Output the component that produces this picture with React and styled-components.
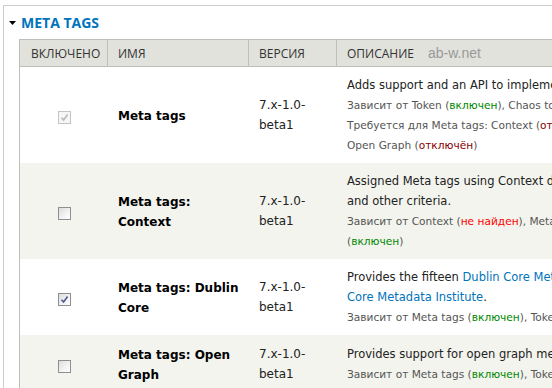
import React from "react";
import styled, { createGlobalStyle } from "styled-components";

const Global = createGlobalStyle`
  html, body { margin: 0; padding: 0; background: #fff; overflow: hidden; }
  body { font-family: "DejaVu Sans", Verdana, sans-serif; color: #333; }
`;

const Fieldset = styled.div`
  margin: 5px 0 0 3px;
  border-top: 1px solid #ccc;
  border-left: 1px solid #ccc;
  padding: 0 0 0 15px;
  width: 1000px;
  height: 400px;
`;

const Legend = styled.div`
  display: flex;
  align-items: center;
  gap: 5px;
  height: 33px;
  margin-left: -10px;
  font-family: "Open Sans", sans-serif;
  font-weight: 700;
  font-size: 14px;
  color: #0074bd;
  text-transform: uppercase;
`;

const Arrow = styled.svg`
  width: 7px;
  height: 4px;
  flex: none;
  margin-top: 1px;
`;

const Table = styled.div`
  border-left: 1px solid #bebfb9;
  width: 880px;
`;

const COLS = "88px 141px 88px 1fr";

const HeaderRow = styled.div`
  display: grid;
  grid-template-columns: ${COLS};
  height: 28px;
  box-sizing: border-box;
  background: #e1e2dc;
  border-top: 1px solid #bebfb9;
  border-bottom: 1px solid #bebfb9;
`;

const Th = styled.div`
  display: flex;
  align-items: center;
  padding: 0 10px 0 ${(p) => p.$pl || 10}px;
  border-right: 1px solid #bebfb9;
  font-family: "Open Sans", sans-serif;
  font-size: 12px;
  color: #333;
  text-transform: uppercase;
  white-space: nowrap;
`;

const Watermark = styled.span`
  margin-left: 14px;
  font-family: "Liberation Sans", Arial, sans-serif;
  font-size: 14px;
  color: #999;
  text-transform: none;
`;

const Row = styled.div`
  display: grid;
  grid-template-columns: ${COLS};
  background: ${(p) => (p.$even ? "#f3f4ee" : "#fff")};
`;

const Cell = styled.div`
  padding: 8px 10px;
  align-self: center;
  line-height: 20px;
`;

const CheckCell = styled(Cell)`
  display: flex;
  justify-content: center;
  padding-top: 12px;
  padding-bottom: 8px;
`;

const Name = styled(Cell)`
  font-weight: 700;
  font-size: 12px;
  color: #000;
  padding-top: 10px;
  padding-bottom: 8px;
`;

const Version = styled(Cell)`
  font-size: 12px;
  color: #222;
`;

const Desc = styled(Cell)`
  color: #222;
`;

const Line = styled.div`
  white-space: nowrap;
  font-size: ${(p) => (p.$small ? "10.6px" : "11.5px")};
  color: ${(p) => (p.$small ? "#555" : "#222")};
`;

const Status = styled.span`
  color: ${(p) =>
    p.$kind === "on" ? "#080" : p.$kind === "off" ? "#800" : "#f00"};
`;

const Link = styled.a`
  color: #0074bd;
  text-decoration: none;
`;

const Box = styled.span`
  display: inline-flex;
  align-items: center;
  justify-content: center;
  box-sizing: border-box;
  width: 13px;
  height: 13px;
  border: 1px solid ${(p) => (p.$disabled ? "#c4c4c4" : "#8f8f8f")};
  background: ${(p) =>
    p.$disabled
      ? "#f6f6f6"
      : "linear-gradient(135deg, #dcdcdc 0%, #f4f4f4 60%, #ffffff 100%)"};
`;

const Check = ({ checked, disabled }) => (
  <Box $disabled={disabled}>
    {checked && (
      <svg width="9" height="9" viewBox="0 0 9 9">
        <path
          d="M1.5 4.8 L3.6 7 L7.6 1.6"
          fill="none"
          stroke={disabled ? "#b8b8b8" : "#4a5a90"}
          strokeWidth="1.6"
        />
      </svg>
    )}
  </Box>
);

const on = (t = "включен") => <Status $kind="on">{t}</Status>;
const off = (t = "отключён") => <Status $kind="off">{t}</Status>;
const miss = (t = "не найден") => <Status $kind="miss">{t}</Status>;

const rows = [
  {
    checked: true,
    disabled: true,
    name: "Meta tags",
    lines: [
      { text: <>Adds support and an API to implement meta tags.</> },
      {
        small: true,
        text: (
          <>
            Зависит от Token ({on()}), Chaos tools ({on()})
          </>
        ),
      },
      {
        small: true,
        text: (
          <>
            Требуется для Meta tags: Context ({off()}), Meta tags: Dublin Core ({on()}), Meta tags:
          </>
        ),
      },
      { small: true, text: <>Open Graph ({off()})</> },
    ],
  },
  {
    checked: false,
    name: "Meta tags: Context",
    lines: [
      {
        text: (
          <>Assigned Meta tags using Context definitions, allowing them to be assigned by path</>
        ),
      },
      { text: <>and other criteria.</> },
      {
        small: true,
        text: (
          <>
            Зависит от Context ({miss()}), Meta tags ({on()}), Token ({on()}), Chaos tools
          </>
        ),
      },
      { small: true, text: <>({on()})</> },
    ],
  },
  {
    checked: true,
    name: "Meta tags: Dublin Core",
    lines: [
      {
        text: (
          <>
            Provides the fifteen <Link>Dublin Core Metadata Element Set 1.1</Link> elements from the{" "}
            <Link>Dublin</Link>
          </>
        ),
      },
      {
        text: (
          <>
            <Link>Core Metadata Institute</Link>.
          </>
        ),
      },
      {
        small: true,
        text: (
          <>
            Зависит от Meta tags ({on()}), Token ({on()}), Chaos tools ({on()})
          </>
        ),
      },
    ],
  },
  {
    checked: false,
    name: "Meta tags: Open Graph",
    lines: [
      { text: <>Provides support for open graph meta tags.</> },
      {
        small: true,
        text: (
          <>
            Зависит от Meta tags ({on()}), Token ({on()}), Chaos tools ({on()})
          </>
        ),
      },
    ],
  },
];

export default function App() {
  return (
    <>
      <Global />
      <Fieldset>
        <Legend>
          <Arrow viewBox="0 0 7 4">
            <path d="M0 0 H7 L3.5 4 Z" fill="#000" />
          </Arrow>
          Meta tags
        </Legend>
        <Table>
          <HeaderRow>
            <Th $pl={11}>Включено</Th>
            <Th>Имя</Th>
            <Th>Версия</Th>
            <Th>
              Описание<Watermark>ab-w.net</Watermark>
            </Th>
          </HeaderRow>
          {rows.map((r, i) => (
            <Row key={r.name} $even={i % 2 === 1}>
              <CheckCell>
                <Check checked={r.checked} disabled={r.disabled} />
              </CheckCell>
              <Name>{r.name}</Name>
              <Version>7.x-1.0-beta1</Version>
              <Desc>
                {r.lines.map((l, j) => (
                  <Line key={j} $small={l.small}>
                    {l.text}
                  </Line>
                ))}
              </Desc>
            </Row>
          ))}
        </Table>
      </Fieldset>
    </>
  );
}
